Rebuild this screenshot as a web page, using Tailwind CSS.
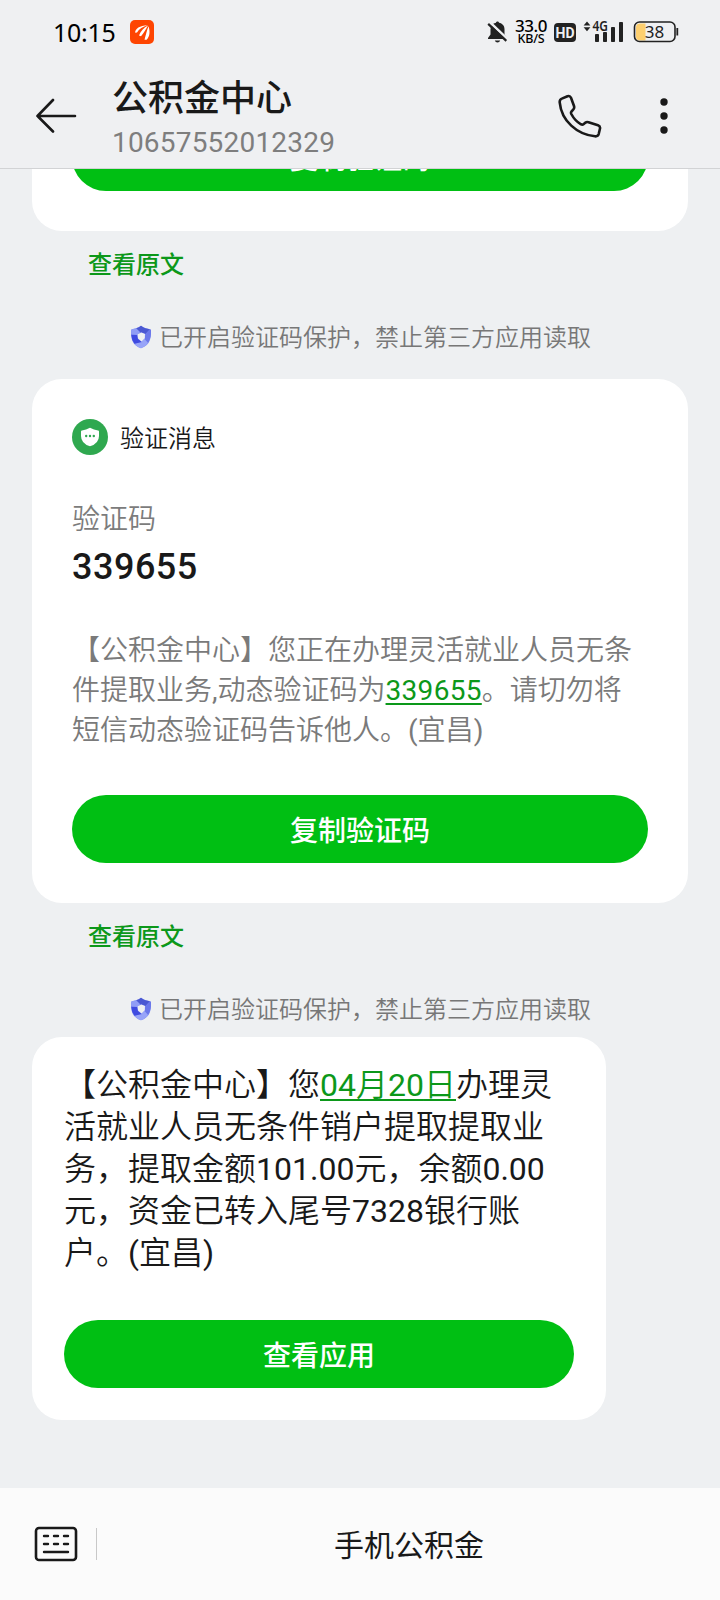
<!DOCTYPE html>
<html lang="zh-CN">
<head>
<meta charset="utf-8">
<title>公积金中心</title>
<script src="https://cdn.jsdelivr.net/npm/@tailwindcss/browser@4"></script>
</head>
<body class="bg-[#eef0f2]">
<div class="w-[720px] h-[1600px] flex flex-col overflow-hidden bg-[#eef0f2] text-[#191919] font-['Roboto','Noto_Sans_CJK_SC',sans-serif]">
  <header class="h-[169px] shrink-0 border-b border-[#d2d3d5] bg-[#eff0f2] flex flex-col">
    <!-- status bar -->
    <div class="h-16 flex items-center justify-between pl-[53px] pr-[41px] text-black">
      <div class="flex items-center gap-[15px]">
        <span class="w-[62px] whitespace-nowrap text-[25px] leading-8 font-['Noto_Sans',sans-serif] tracking-[-0.3px]">10:15</span>
        <svg class="size-6" viewBox="0 0 24 24"><rect width="24" height="24" rx="5" fill="#fe4502"/><path d="M5.200 12.800C4.800 8.500 10 5.600 17.500 5.200 13 6.500 9 8.800 7 12.600ZM9 15.600C10.500 11.300 13.800 7.600 18 5.600 16 9.400 13.800 13.200 11 16.200ZM14.500 19.700C15.700 15.200 17 10 18.500 6.200 20.300 11.500 19.800 16.600 16.600 19.700Z" fill="#fff"/></svg>
      </div>
      <div class="flex items-center">
        <svg class="w-[21px] h-6" viewBox="0 0 21 24"><path d="M10.500 1.500c.9 0 1.500.6 1.500 1.300 3.400.7 5.500 3.100 5.500 6.400v5.300l2.500 3.500v1H1v-1l2.500-3.500V9.200c0-3.300 2.100-5.700 5.500-6.400 0-.7.600-1.300 1.500-1.300ZM7.800 20.600h5.400c-.5 1.300-1.500 1.900-2.700 1.900s-2.200-.6-2.700-1.900Z" fill="#222"/><path d="M2.800 2.300 20.700 19.300" stroke="#eff0f2" stroke-width="2.600"/><path d="M1.200 3.900 19.300 20.900" stroke="#222" stroke-width="2.200"/></svg>
        <div class="ml-[6px] w-[34px] flex flex-col items-center font-['Noto_Sans',sans-serif] font-medium leading-none">
          <span class="text-[17px] leading-[14px] tracking-[-0.5px] whitespace-nowrap">33.0</span>
          <span class="text-[12.500px] leading-[12px] whitespace-nowrap tracking-[-0.2px]">KB/S</span>
        </div>
        <div class="ml-1.5 mt-px w-[22px] h-[19px] rounded bg-[#222] flex items-center justify-center text-[#eff0f2] text-[14px] font-bold leading-none">HD</div>
        <svg class="ml-[7px] w-[41px] h-6 overflow-visible" viewBox="0 0 41 24"><path d="M4 1.500 7.400 5.400H.6ZM4 11.200.6 7.300h6.800Z" fill="#222"/><g fill="#222"><rect x="12" y="14" width="4" height="8" rx=".8"/><rect x="20" y="12" width="4" height="10" rx=".8"/><rect x="28" y="7" width="4" height="15" rx=".8"/><rect x="36" y="2" width="4" height="20" rx=".8"/></g><text x="9.500" y="10.800" font-family="Noto Sans" font-size="13.500" font-weight="600" textLength="15.500" lengthAdjust="spacingAndGlyphs" fill="#222">4G</text></svg>
        <svg class="ml-[9px] w-[46px] h-[22px]" viewBox="0 0 45 22"><path d="M6.500 2.500H12v17H6.500a4 4 0 0 1-4-4v-9a4 4 0 0 1 4-4Z" fill="#fdcf6f"/><rect x="1" y="1" width="40.500" height="19.500" rx="5" fill="none" stroke="#222" stroke-width="1.600"/><path d="M43.800 7v7.500" stroke="#222" stroke-width="1.800"/><text x="21" y="16.700" text-anchor="middle" font-family="Noto Sans" font-size="17" fill="#222">38</text></svg>
      </div>
    </div>
    <!-- conversation title -->
    <div class="h-[104px] flex items-start pl-9">
      <svg class="mt-[34px] w-[42px] h-9" viewBox="0 0 42 36" fill="none" stroke="#191919" stroke-width="2.600" stroke-linecap="round" stroke-linejoin="round"><path d="M39 18H1.500M17 2 1.500 18 17 33.500"/></svg>
      <div class="ml-[34px] flex-1 pt-[10px]">
        <h1 class="text-[36px] leading-[50px] font-medium">公积金中心</h1>
        <p class="mt-0.5 text-[28px] leading-[34px] tracking-[0.200px] text-[#7e7e7e]">10657552012329</p>
      </div>
      <svg class="mt-[30px] w-[44px] h-[44px]" viewBox="0 0 44 44" fill="none" stroke="#191919" stroke-width="2.600" stroke-linejoin="round"><path d="M3.800 4.600 9.500 2.200Q12 1.400 13 3.800L16 12Q16.700 14.200 15.200 15.700L13.500 17.500Q12.600 18.500 13.300 20 17 27 23 30.300 24.500 31 25.800 30L27.500 28.600Q28.700 27.700 30.500 28.300L40 31.300Q42.500 32.200 42 34.500L40.700 40Q40 42.600 37 42.300C19 40.500 3.500 27 1.700 8.300Q1.500 5.500 3.800 4.600Z"/></svg>
      <svg class="mt-[34px] ml-[58px] mr-[52px] w-2 h-9" viewBox="0 0 8 36" fill="#191919"><circle cx="4" cy="4" r="3.700"/><circle cx="4" cy="18" r="3.700"/><circle cx="4" cy="32" r="3.700"/></svg>
    </div>
  </header>

  <main class="flex-1 min-h-0 overflow-hidden px-8">
    <section class="h-[62px] px-10 bg-white rounded-b-[30px] overflow-hidden">
      <button class="block -mt-[46px] w-full h-[68px] rounded-full bg-[#00bf13] text-white text-[28px] font-medium pt-1.5">复制验证码</button>
    </section>
    <a class="block mt-4 pl-14 text-[24px] leading-9 font-medium text-[#0c981a]">查看原文</a>
    <div class="mt-[37px] h-9 pl-[98px] flex items-center gap-[7px]">
      <svg class="w-[22px] h-[24px] -mt-[3px]" viewBox="0 0 22 24"><path d="M11 .8C14 3 17 3.800 20 4.200Q21 4.400 21 5.500C21.300 14 19.500 20.500 11 23.200 2.500 20.500.7 14 1 5.500Q1 4.400 2 4.200C5 3.800 8 3 11 .8Z" fill="#7f8df2"/><path d="M11 .8C14 3 17 3.800 20 4.200L15.500 9 9.500 7 6 3.300Q9 2.500 11 .8Z" fill="#4a58d2"/><path d="M20 4.200Q21 4.400 21 5.500 21.300 13 18 18L14.500 14.500 15.500 9Z" fill="#6b78ea"/><path d="M18 18Q15.500 21.800 11 23.200 7 22 4.500 18.700L10 17 14.500 14Z" fill="#97a4f8"/><path d="M4.500 18.700Q1.500 15 1.200 9.500L7 9.500 8 14 12 17Z" fill="#3f4be0"/><path d="M1.200 9.500 1 5.500Q1 4.400 2 4.200L6 3.300 10 7 7 10Z" fill="#909df6"/><path d="M11.500 7.600 15 9 14.800 13.200 11.500 16.600 8 13.500 7.600 9.200Z" fill="#eef0f2"/></svg>
      <span class="text-[24px] leading-9 font-[350] text-[#777]">已开启验证码保护，禁止第三方应用读取</span>
    </div>

    <section class="mt-[23px] h-[524px] px-10 pt-10 bg-white rounded-[30px]">
      <div class="h-9 flex items-center gap-3">
        <svg class="size-9" viewBox="0 0 36 36"><circle cx="18" cy="18" r="18" fill="#2fa84f"/><path d="M18 8.700Q22 11 26 11.400 27 11.500 27 12.500V17Q27 24.500 18 27.300 9 24.500 9 17V12.500Q9 11.500 10 11.400 14 11 18 8.700Z" fill="#fff"/><g fill="#2fa84f"><circle cx="14.200" cy="17" r="1.200"/><circle cx="18" cy="17" r="1.200"/><circle cx="21.800" cy="17" r="1.200"/></g></svg>
        <span class="text-[24px] leading-9 pt-[4px] font-[350]">验证消息</span>
      </div>
      <p class="mt-[45px] text-[28px] leading-10 font-[350] text-[#7c7c7c]">验证码</p>
      <p class="mt-[5px] text-[36px] leading-[44px] font-medium tracking-[0.500px]">339655</p>
      <p class="mt-[42px] text-[28px] leading-10 font-[350] text-[#7a7a7a] whitespace-nowrap">【公积金中心】您正在办理灵活就业人员无条<br>件提取业务<span class="font-normal">,</span>动态验证码为<span class="font-normal tracking-[0.300px] text-[#0c981a] underline decoration-[1.500px] underline-offset-[3px]">339655</span>。请切勿将<br>短信动态验证码告诉他人。<span class="font-normal">(</span>宜昌<span class="font-normal">)</span></p>
      <button class="block mt-[44px] w-full h-[68px] rounded-full bg-[#00bf13] text-white text-[28px] font-medium pt-1.5">复制验证码</button>
    </section>
    <a class="block mt-4 pl-14 text-[24px] leading-9 font-medium text-[#0c981a]">查看原文</a>
    <div class="mt-[37px] h-9 pl-[98px] flex items-center gap-[7px]">
      <svg class="w-[22px] h-[24px] -mt-[3px]" viewBox="0 0 22 24"><path d="M11 .8C14 3 17 3.800 20 4.200Q21 4.400 21 5.500C21.300 14 19.500 20.500 11 23.200 2.500 20.500.7 14 1 5.500Q1 4.400 2 4.200C5 3.800 8 3 11 .8Z" fill="#7f8df2"/><path d="M11 .8C14 3 17 3.800 20 4.200L15.500 9 9.500 7 6 3.300Q9 2.500 11 .8Z" fill="#4a58d2"/><path d="M20 4.200Q21 4.400 21 5.500 21.300 13 18 18L14.500 14.500 15.500 9Z" fill="#6b78ea"/><path d="M18 18Q15.500 21.800 11 23.200 7 22 4.500 18.700L10 17 14.500 14Z" fill="#97a4f8"/><path d="M4.500 18.700Q1.500 15 1.200 9.500L7 9.500 8 14 12 17Z" fill="#3f4be0"/><path d="M1.200 9.500 1 5.500Q1 4.400 2 4.200L6 3.300 10 7 7 10Z" fill="#909df6"/><path d="M11.500 7.600 15 9 14.800 13.200 11.500 16.600 8 13.500 7.600 9.200Z" fill="#eef0f2"/></svg>
      <span class="text-[24px] leading-9 font-[350] text-[#777]">已开启验证码保护，禁止第三方应用读取</span>
    </div>

    <section class="mt-[9px] w-[574px] h-[383px] px-8 pt-[27px] bg-white rounded-[30px]">
      <p class="text-[32px] leading-[42px] font-[350] whitespace-nowrap">【公积金中心】您<span class="text-[#0c981a] underline decoration-[1.500px] underline-offset-[3px]"><span class="font-normal">04</span>月<span class="font-normal">20</span>日</span>办理灵<br>活就业人员无条件销户提取提取业<br>务，提取金额<span class="font-normal">101.00</span>元，余额<span class="font-normal">0.00</span><br>元，资金已转入尾号<span class="font-normal">7328</span>银行账<br>户。<span class="font-normal">(</span>宜昌<span class="font-normal">)</span></p>
      <button class="block mt-[46px] w-full h-[68px] rounded-full bg-[#00bf13] text-white text-[28px] font-medium pt-1.5">查看应用</button>
    </section>
  </main>

  <footer class="h-28 shrink-0 bg-[#fbfbfb] flex items-center pl-[34px]">
    <svg class="w-[44px] h-9" viewBox="0 0 44 36" fill="none" stroke="#191919" stroke-width="2.600" stroke-linecap="round"><rect x="2" y="2" width="40" height="32" rx="3"/><path d="M10 10h4M20 10h4M30 10h4M10 18h4M20 18h4M30 18h4M10 26h24" stroke-width="2.400"/></svg>
    <div class="ml-[18px] w-px h-8 bg-[#c8c8c8]"></div>
    <div class="flex-1 text-center text-[30px] leading-10 pt-[3px] pl-px">手机公积金</div>
  </footer>
</div>
</body>
</html>
